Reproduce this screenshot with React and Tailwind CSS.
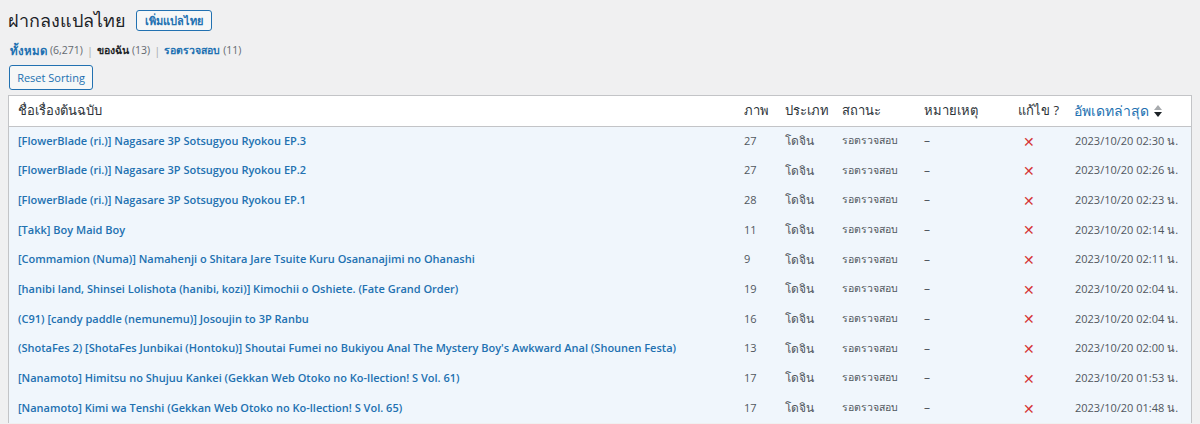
import React from 'react';

const rows = [
  ['[FlowerBlade (ri.)] Nagasare 3P Sotsugyou Ryokou EP.3', '27', '2023/10/20 02:30 น.'],
  ['[FlowerBlade (ri.)] Nagasare 3P Sotsugyou Ryokou EP.2', '27', '2023/10/20 02:26 น.'],
  ['[FlowerBlade (ri.)] Nagasare 3P Sotsugyou Ryokou EP.1', '28', '2023/10/20 02:23 น.'],
  ['[Takk] Boy Maid Boy', '11', '2023/10/20 02:14 น.'],
  ['[Commamion (Numa)] Namahenji o Shitara Jare Tsuite Kuru Osananajimi no Ohanashi', '9', '2023/10/20 02:11 น.'],
  ['[hanibi land, Shinsei Lolishota (hanibi, kozi)] Kimochii o Oshiete. (Fate Grand Order)', '19', '2023/10/20 02:04 น.'],
  ['(C91) [candy paddle (nemunemu)] Josoujin to 3P Ranbu', '16', '2023/10/20 02:04 น.'],
  ["(ShotaFes 2) [ShotaFes Junbikai (Hontoku)] Shoutai Fumei no Bukiyou Anal The Mystery Boy's Awkward Anal (Shounen Festa)", '13', '2023/10/20 02:00 น.'],
  ['[Nanamoto] Himitsu no Shujuu Kankei (Gekkan Web Otoko no Ko-llection! S Vol. 61)', '17', '2023/10/20 01:53 น.'],
  ['[Nanamoto] Kimi wa Tenshi (Gekkan Web Otoko no Ko-llection! S Vol. 65)', '17', '2023/10/20 01:48 น.'],
];

const font = { fontFamily: '"Open Sans", "Noto Sans", "DejaVu Sans", sans-serif' };

export default function App() {
  return (
    <div className="h-[424px] bg-[#f0f0f1] text-[13px] text-[#3c434a] overflow-hidden" style={font}>
      <div className="pl-[8px] pr-[8px]">
        {/* Page title */}
        <div className="flex items-center gap-[10px] h-[40px]">
          <h1 className="text-[18px] font-normal text-[#1d2327] leading-none">ฝากลงแปลไทย</h1>
          <button className="h-[21px] px-[8px] text-[11px] font-semibold text-[#2271b1] border border-[#2271b1] rounded-[3px] bg-[#f6f7f7] leading-none">
            เพิ่มแปลไทย
          </button>
        </div>

        {/* Subsub */}
        <div className="h-[22px] pl-[2px] flex items-center text-[11px] text-[#646970]">
          <a className="text-[#2271b1] font-semibold text-[11.5px]">ทั้งหมด</a>
          <span className="ml-[3px] text-[10.5px]">(6,271)</span>
          <span className="mx-[4px] text-[#a7aaad]">|</span>
          <a className="text-[#1d2327] font-bold text-[10.5px]">ของฉัน</a>
          <span className="ml-[3px] text-[10.5px]">(13)</span>
          <span className="mx-[4px] text-[#a7aaad]">|</span>
          <a className="text-[#2271b1] font-semibold text-[10.5px]">รอตรวจสอบ</a>
          <span className="ml-[3px] text-[10.5px]">(11)</span>
        </div>

        <div className="h-[33px] pt-[3px] flex items-start">
          <button className="h-[25px] w-[84px] ml-[1px] text-[11px] text-[#2271b1] border border-[#2271b1] rounded-[3px] bg-[#f6f7f7] leading-none">
            Reset Sorting
          </button>
        </div>

        {/* Table */}
        <div className="border border-b-0 border-[#c3c4c7] bg-white">
          <table className="w-full table-fixed border-collapse">
            <colgroup>
              <col className="w-[735px]" />
              <col className="w-[41px]" />
              <col className="w-[57px]" />
              <col className="w-[82px]" />
              <col className="w-[93px]" />
              <col className="w-[56px]" />
              <col />
            </colgroup>
            <thead>
              <tr className="h-[30px] border-b border-[#c3c4c7] text-left text-[#2c3338] text-[13px]">
                <th className="font-normal pl-[9px]">ชื่อเรื่องต้นฉบับ</th>
                <th className="font-normal">ภาพ</th>
                <th className="font-normal">ประเภท</th>
                <th className="font-normal">สถานะ</th>
                <th className="font-normal">หมายเหตุ</th>
                <th className="font-normal pl-[1px]">แก้ไข ?</th>
                <th className="font-normal pl-[1px]">
                  <span className="inline-flex items-center text-[#2271b1] text-[14px]">
                    อัพเดทล่าสุด
                    <svg width="8" height="12" viewBox="0 0 8 12" className="ml-[5px]">
                      <path d="M4 0 L8 5 L0 5 Z" fill="#a7aaad" />
                      <path d="M0 7 L8 7 L4 12 Z" fill="#1d2327" />
                    </svg>
                  </span>
                </th>
              </tr>
            </thead>
            <tbody className="bg-[#f0f6fc]">
              {rows.map(([title, pics, date], i) => (
                <tr key={i} className="h-[29.7px] text-[12px] text-[#50575e]">
                  <td className="pl-[9px] text-[#2271b1] font-semibold text-[11px] whitespace-nowrap overflow-hidden">{title}</td>
                  <td className="text-[11px]">{pics}</td>
                  <td>โดจิน</td>
                  <td className="text-[10.5px]">รอตรวจสอบ</td>
                  <td>–</td>
                  <td className="pl-[6px] text-[#d63638] font-bold text-[14px]">✕</td>
                  <td className="pl-[2px] text-[11px] whitespace-nowrap">{date}</td>
                </tr>
              ))}
            </tbody>
          </table>
        </div>
      </div>
    </div>
  );
}
